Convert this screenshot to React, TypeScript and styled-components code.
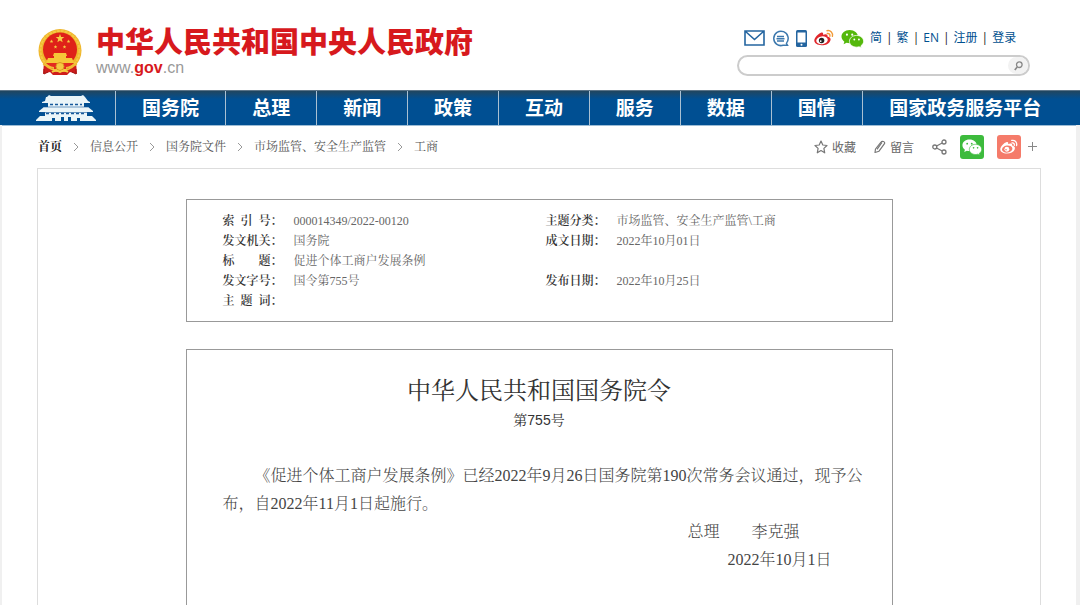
import React from 'react';
import styled, { createGlobalStyle } from 'styled-components';

const song = '"Liberation Serif", "Noto Serif CJK SC", "Noto Sans CJK SC", serif';
const hei = '"Noto Sans CJK SC", sans-serif';

const GlobalStyle = createGlobalStyle`
  * { box-sizing: border-box; }
  body { margin: 0; background: #fff; color: #333; font-family: ${song}; }
  a { color: inherit; text-decoration: none; }
`;

const Page = styled.div`
  min-height: 100vh;
  display: flex;
  flex-direction: column;
`;

const Header = styled.header`
  display: flex;
  justify-content: space-between;
  align-items: flex-start;
  height: 90px;
  padding: 24px 50px 0 37px;
`;

const Brand = styled.a`
  display: flex;
  gap: 13px;
  padding-top: 4px;
`;

const BrandText = styled.div`
  display: flex;
  flex-direction: column;
  gap: 2px;
  margin-top: -6px;
`;

const BrandName = styled.span`
  font: 900 29px/36px ${hei};
  color: #d7191d;
  white-space: nowrap;
`;

const BrandUrl = styled.span`
  font: 16px/16px "Liberation Sans", sans-serif;
  color: #999;
  b { color: #d7191d; }
`;

const Tools = styled.div`
  display: flex;
  flex-direction: column;
  gap: 3px;
  width: 293px;
`;

const ToolRow = styled.div`
  display: flex;
  align-items: center;
  height: 28px;
  padding-left: 7px;
`;

const ToolIcons = styled.div`
  display: flex;
  align-items: center;
  gap: 7px;
  margin-right: 6px;
  a { display: flex; }
`;

const ToolLinks = styled.div`
  display: flex;
  font: 12px/20px "Open Sans", ${hei};
  color: #00508f;
  white-space: nowrap;
  a + a::before {
    content: '|';
    color: #222;
    margin: 0 4px;
  }
`;

const Search = styled.form`
  display: flex;
  align-items: center;
  height: 21px;
  border: 2px solid #ccc;
  border-radius: 11px;
  overflow: hidden;
`;

const SearchInput = styled.input`
  flex: 1;
  min-width: 0;
  border: 0;
  outline: 0;
  background: none;
  padding: 0 10px;
  font-size: 12px;
`;

const SearchButton = styled.button`
  display: flex;
  align-items: center;
  justify-content: center;
  width: 20px;
  height: 17px;
  padding: 0;
  border: 0;
  border-radius: 9px;
  background: #f2f2f2;
`;

const Nav = styled.nav`
  display: flex;
  height: 35px;
  background: linear-gradient(#21465f, #004f92 8px);
  border-top: 1px solid #5b7488;
  box-shadow: 0 1px 0 #9dbdd6;
`;

const NavItem = styled.a<{ $grow: number }>`
  flex: ${p => p.$grow} 1 0;
  display: flex;
  align-items: center;
  justify-content: center;
  font: bold 19px/32px ${hei};
  color: #fff;
  white-space: nowrap;
  & + & { border-left: 1px solid #a9c0d2; }
  svg { margin-left: 18px; }
  span { padding-bottom: 2px; }
  &:last-child span { margin-right: 12px; }
`;

const Main = styled.main`
  flex: 1;
  display: flex;
  flex-direction: column;
  padding: 0 35px;
  border: solid #f0f0f0;
  border-width: 0 4px 0 2px;
`;

const Bar = styled.div`
  display: flex;
  align-items: center;
  justify-content: space-between;
  height: 43px;
`;

const Crumbs = styled.nav`
  display: flex;
  align-items: center;
  gap: 11px;
  padding-left: 1px;
  font-size: 12px;
  line-height: 20px;
  color: #555;
  a:first-child { font-weight: bold; color: #222; }
`;

const Actions = styled.div`
  display: flex;
  align-items: center;
  gap: 18px;
  padding-right: 4px;
`;

const Action = styled.button`
  display: flex;
  align-items: center;
  gap: 4px;
  padding: 0;
  border: 0;
  background: none;
  color: #666;
  font: 12px/20px ${hei};
`;

const ShareGroup = styled.div`
  display: flex;
  align-items: center;
  gap: 13px;
`;

const ShareTile = styled.button<{ $color: string }>`
  display: flex;
  align-items: center;
  justify-content: center;
  width: 24px;
  height: 24px;
  padding: 0;
  border: 0;
  border-radius: 3px;
  background: ${p => p.$color};
`;

const PlusButton = styled(Action)`
  margin-left: -6px;
`;

const Frame = styled.div`
  flex: 1;
  display: flex;
  flex-direction: column;
  align-items: center;
  gap: 27px;
  padding: 30px 20px 0;
  border: 1px solid #ddd;
  border-bottom: 0;
`;

const Sheet = styled.section`
  width: 100%;
  max-width: 707px;
  border: 1px solid #999;
`;

const MetaSheet = styled(Sheet)`
  padding: 11px 36px 10px;
`;

const MetaTable = styled.table`
  width: 100%;
  table-layout: fixed;
  border-collapse: collapse;
  font-size: 12px;
  line-height: 20px;
  th, td { padding: 0; height: 20px; text-align: left; white-space: nowrap; }
  th { color: #333; font-weight: 600; }
  td { color: #666; }
`;

const LabelCol = styled.col`
  width: 71px;
`;

const FirstValueCol = styled.col`
  width: 252px;
`;

const LabelText = styled.span`
  display: inline-block;
  width: 48px;
  vertical-align: top;
  text-align-last: justify;
`;

const Decree = styled(Sheet)`
  flex: 1;
  border-bottom: 0;
  padding: 26px 28px 0 36px;
`;

const Title = styled.h1`
  margin: 0;
  padding-right: 8px;
  font-size: 24px;
  font-weight: 400;
  line-height: 30px;
  text-align: center;
  color: #333;
`;

const Number = styled.p`
  margin: 0 0 28px;
  padding-right: 8px;
  font: 14px/28px "Liberation Sans", "Noto Serif CJK SC", "Noto Sans CJK SC", sans-serif;
  text-align: center;
`;

const Paragraph = styled.p`
  margin: 0;
  font-size: 16px;
  font-weight: 300;
  line-height: 28px;
  text-indent: 2em;
  color: #444;
`;

const Signature = styled(Paragraph)<{ $inset: number }>`
  text-align: right;
  text-indent: 0;
  padding-right: ${p => p.$inset}em;
`;

const Star = ({ x, y, r }: { x: number; y: number; r: number }) => {
  const pts = Array.from({ length: 10 }, (_, i) => {
    const a = (Math.PI / 5) * i - Math.PI / 2;
    const d = i % 2 ? r * 0.42 : r;
    return `${x + d * Math.cos(a)},${y + d * Math.sin(a)}`;
  }).join(' ');
  return <polygon points={pts} fill="#f6cf45" />;
};

const Emblem = () => (
  <svg width="46" height="48" viewBox="0 0 46 48" aria-hidden="true">
    <path d="M7 34 6 46l7-2 3 3h14l3-3 7 2-1-12Z" fill="#cf1c1c" />
    <circle cx="23" cy="22.500" r="21.500" fill="#efb62c" />
    <circle cx="23" cy="22.500" r="19.500" fill="none" stroke="#f5c945" strokeWidth="2" strokeDasharray="3 1" />
    <circle cx="23" cy="21.500" r="17" fill="#df2119" />
    <Star x={23} y={10.5} r={4.5} />
    <Star x={14.5} y={13.5} r={1.9} />
    <Star x={31.5} y={13.5} r={1.9} />
    <Star x={18.5} y={19} r={1.9} />
    <Star x={27.5} y={19} r={1.9} />
    <path d="M17 25h12l1 3H16Zm0 3h12v2h6l2 5H9l2-5h6Z" fill="#f6c838" />
    <path d="M9 35h28l-6 6H15Z" fill="#e32b20" />
    <path d="M6 36c4 1 7 4 11 4M40 36c-4 1-7 4-11 4" stroke="#f0bb35" strokeWidth="2" fill="none" />
    <circle cx="23" cy="38.500" r="4" fill="#f5ca42" stroke="#d9951f" />
    <path d="M15 44c3-2 5-2 8 0 3-2 5-2 8 0" fill="none" stroke="#f5ca42" strokeWidth="2" />
    <path d="M7 41v5l4-2M39 41v5l-4-2" fill="none" stroke="#9e1714" />
  </svg>
);

const Gate = () => (
  <svg width="60" height="27" viewBox="0 0 60 27" fill="#eaf5f8" aria-hidden="true">
    <path d="M10 2h1l2-2 2 1h30l2-1 2 2 3 4 2 1v1H6V7l3-1Z" />
    <path d="M12 8h36v4H12Zm-4 4h44l5 4v1H3v-1Z" />
    <path d="M9 17h42v4H9Z" />
    <path d="M4 21h52l4 4v1H44v-3h-3v3h-6v-4h-3v4h-4v-4h-3v4h-6v-3h-3v3H0v-1Z" />
    <path d="M14 9.500h32M10 18.500h40" stroke="#15599a" strokeWidth="1.500" strokeDasharray="3 2" />
    <path d="M8 12h44M5 17.500h50" stroke="#15599a" strokeWidth=".6" />
  </svg>
);

const MailIcon = () => (
  <svg width="21" height="16" viewBox="0 0 21 16" fill="none" stroke="#2465a0" strokeWidth="1.600" aria-hidden="true">
    <path d="M1 1h19v14H1Zm0 0 9.500 8.500L20 1" />
  </svg>
);

const ChatIcon = () => (
  <svg width="17" height="17" viewBox="0 0 17 17" fill="none" stroke="#3c78ad" strokeWidth="1.500" aria-hidden="true">
    <path d="M14.500 13A7.200 7.200 0 1 0 11 15.300h4.500L14.200 13M5 6.500h7M4.500 8.700h8M5 11h7" />
  </svg>
);

const PhoneIcon = () => (
  <svg width="11" height="17" viewBox="0 0 11 17" aria-hidden="true">
    <rect width="11" height="17" rx="1.500" fill="#2465a0" />
    <path d="M1.500 2.500h8v10h-8Z" fill="#fff" />
    <circle cx="5.500" cy="14.700" r="1" fill="#fff" />
  </svg>
);

type WeiboProps = { size: number; body: string; eye: string; inner: string; wave: string };

const WeiboIcon = ({ size, body, eye, inner, wave }: WeiboProps) => (
  <svg width={size} height={size} viewBox="0 0 20 20" fill="none" aria-hidden="true">
    <path d="M7.500 4.500C9 4 9.400 5.200 9 6.700c2.500-1 5-.8 4.500 1.700 3 .8 3.600 2.300 2.800 4.300-1.100 2.900-4.600 4.600-8.600 4.600C3.300 17.300.3 15.300.3 12.600.3 9.800 4.500 5.300 7.500 4.500Z" fill={body} />
    <ellipse cx="8" cy="12.300" rx="5.800" ry="3.900" transform="rotate(-8 8 12.300)" fill={inner} />
    <circle cx="7.600" cy="12.500" r="2.700" fill={eye} />
    <circle cx="6.700" cy="13.100" r=".9" fill={inner} />
    <path d="M13 2.700c3.500-.7 6.300 2 5.400 5.700M13.300 5.500c1.800-.3 3 .9 2.600 2.700" stroke={wave} strokeWidth="1.400" strokeLinecap="round" />
  </svg>
);

const WechatIcon = ({ size, fill, dot }: { size: number; fill: string; dot: string }) => (
  <svg width={size} height={size} viewBox="0 0 24 24" aria-hidden="true">
    <path d="M9 3C4 3 .5 6.200.5 10c0 2.200 1.100 4 3 5.300L2.700 18l3.100-1.600c1 .3 2 .5 3.200.5 5 0 8.700-3.100 8.700-6.900S14 3 9 3Z" fill={fill} />
    <path d="M16.300 8.800c-4.300 0-7.500 2.700-7.500 6.100s3.200 6.100 7.500 6.100c.9 0 1.800-.1 2.600-.4l2.500 1.300-.7-2.200c1.800-1.200 2.900-2.900 2.900-4.800 0-3.400-3.100-6.100-7.300-6.100Z" fill={fill} stroke={dot} strokeWidth=".8" />
    <g fill={dot}>
      <circle cx="6.200" cy="8" r="1.100" /><circle cx="11.700" cy="8" r="1.100" />
      <circle cx="13.900" cy="13" r="1" /><circle cx="18.700" cy="13" r="1" />
    </g>
  </svg>
);

const SearchIcon = () => (
  <svg width="9" height="10" viewBox="0 0 9 10" fill="none" stroke="#888" strokeWidth="1.300" aria-hidden="true">
    <circle cx="5.300" cy="3.700" r="2.800" />
    <path d="M3.200 6 .8 9" strokeWidth="1.700" />
  </svg>
);

const Chevron = () => (
  <svg width="6" height="10" viewBox="0 0 6 10" fill="none" stroke="#999" aria-hidden="true">
    <path d="m1 1 4 4-4 4" />
  </svg>
);

const StarIcon = () => (
  <svg width="14" height="14" viewBox="0 0 14 14" fill="none" stroke="#777" strokeWidth="1.200" strokeLinejoin="round" aria-hidden="true">
    <path d="m7 1 1.800 4 4.200.5-3.100 2.900.8 4.400L7 10.600l-3.700 2.200.8-4.400L1 5.500 5.200 5Z" />
  </svg>
);

const PenIcon = () => (
  <svg width="12" height="14" viewBox="0 0 12 14" fill="none" stroke="#777" strokeWidth="1.200" strokeLinejoin="round" aria-hidden="true">
    <path d="M1 12.500 1.500 9 7 2c.8-1.200 4.500-.8 3.500 1.700L5 11.200ZM8 2.500 3 9.300" />
  </svg>
);

const ShareIcon = () => (
  <svg width="15" height="16" viewBox="0 0 15 16" fill="none" stroke="#777" strokeWidth="1.300" aria-hidden="true">
    <circle cx="2.800" cy="8" r="2" /><circle cx="12" cy="3" r="2" /><circle cx="12" cy="13" r="2" />
    <path d="m4.600 7 5.600-3M4.600 9l5.600 3" />
  </svg>
);

const PlusIcon = () => (
  <svg width="9" height="9" viewBox="0 0 9 9" stroke="#888" aria-hidden="true">
    <path d="M4.500 0v9M0 4.500h9" />
  </svg>
);

const navItems = [
  { text: '国务院', grow: 111 },
  { text: '总理', grow: 91 },
  { text: '新闻', grow: 91 },
  { text: '政策', grow: 91 },
  { text: '互动', grow: 91 },
  { text: '服务', grow: 91 },
  { text: '数据', grow: 91 },
  { text: '国情', grow: 91 },
  { text: '国家政务服务平台', grow: 220 },
];

const crumbs = ['首页', '信息公开', '国务院文件', '市场监管、安全生产监管', '工商'];

const meta: [string, string, string?, string?][] = [
  ['索 引 号', '000014349/2022-00120', '主题分类', '市场监管、安全生产监管\\工商'],
  ['发文机关', '国务院', '成文日期', '2022年10月01日'],
  ['标 题', '促进个体工商户发展条例'],
  ['发文字号', '国令第755号', '发布日期', '2022年10月25日'],
  ['主 题 词', ''],
];

const Label = ({ text }: { text: string }) => (
  <th scope="row"><LabelText>{text}</LabelText>：</th>
);

export default function App() {
  return (
    <Page>
      <GlobalStyle />
      <Header>
        <Brand href="#">
          <Emblem />
          <BrandText>
            <BrandName>中华人民共和国中央人民政府</BrandName>
            <BrandUrl>www.<b>gov</b>.cn</BrandUrl>
          </BrandText>
        </Brand>
        <Tools>
          <ToolRow>
            <ToolIcons>
              <a href="#" aria-label="邮箱"><MailIcon /></a>
              <a href="#" aria-label="互动"><ChatIcon /></a>
              <a href="#" aria-label="客户端"><PhoneIcon /></a>
              <a href="#" aria-label="微博"><WeiboIcon size={20} body="#e0262b" inner="#fff" eye="#222" wave="#f29a38" /></a>
              <a href="#" aria-label="微信"><WechatIcon size={23} fill="#54b80c" dot="#fff" /></a>
            </ToolIcons>
            <ToolLinks>
              <a href="#">简</a>
              <a href="#">繁</a>
              <a href="#">EN</a>
              <a href="#">注册</a>
              <a href="#">登录</a>
            </ToolLinks>
          </ToolRow>
          <Search onSubmit={e => e.preventDefault()}>
            <SearchInput type="text" aria-label="搜索" />
            <SearchButton type="submit" aria-label="搜索"><SearchIcon /></SearchButton>
          </Search>
        </Tools>
      </Header>

      <Nav>
        <NavItem href="#" $grow={116} aria-label="首页"><Gate /></NavItem>
        {navItems.map(item => (
          <NavItem key={item.text} href="#" $grow={item.grow}><span>{item.text}</span></NavItem>
        ))}
      </Nav>

      <Main>
        <Bar>
          <Crumbs>
            {crumbs.map((text, i) => (
              <React.Fragment key={text}>
                {i > 0 && <Chevron />}
                <a href="#">{text}</a>
              </React.Fragment>
            ))}
          </Crumbs>
          <Actions>
            <Action type="button"><StarIcon />收藏</Action>
            <Action type="button"><PenIcon />留言</Action>
            <ShareGroup>
              <Action type="button" aria-label="分享"><ShareIcon /></Action>
              <ShareTile type="button" $color="#3dbb3d" aria-label="微信"><WechatIcon size={20} fill="#fff" dot="#3dbb3d" /></ShareTile>
              <ShareTile type="button" $color="#f57b6a" aria-label="微博"><WeiboIcon size={18} body="#fff" inner="#f57b6a" eye="#fff" wave="#fff" /></ShareTile>
              <PlusButton type="button" aria-label="更多"><PlusIcon /></PlusButton>
            </ShareGroup>
          </Actions>
        </Bar>

        <Frame>
          <MetaSheet>
            <MetaTable>
              <colgroup><LabelCol /><FirstValueCol /><LabelCol /><col /></colgroup>
              <tbody>
                {meta.map(([label, value, label2, value2]) => (
                  <tr key={label}>
                    <Label text={label} />
                    <td>{value}</td>
                    {label2 && <Label text={label2} />}
                    {label2 && <td>{value2}</td>}
                  </tr>
                ))}
              </tbody>
            </MetaTable>
          </MetaSheet>

          <Decree>
            <Title>中华人民共和国国务院令</Title>
            <Number>第755号</Number>
            <Paragraph>《促进个体工商户发展条例》已经2022年9月26日国务院第190次常务会议通过，现予公布，自2022年11月1日起施行。</Paragraph>
            <Signature $inset={4}>总理　　李克强</Signature>
            <Signature $inset={2}>2022年10月1日</Signature>
          </Decree>
        </Frame>
      </Main>
    </Page>
  );
}
